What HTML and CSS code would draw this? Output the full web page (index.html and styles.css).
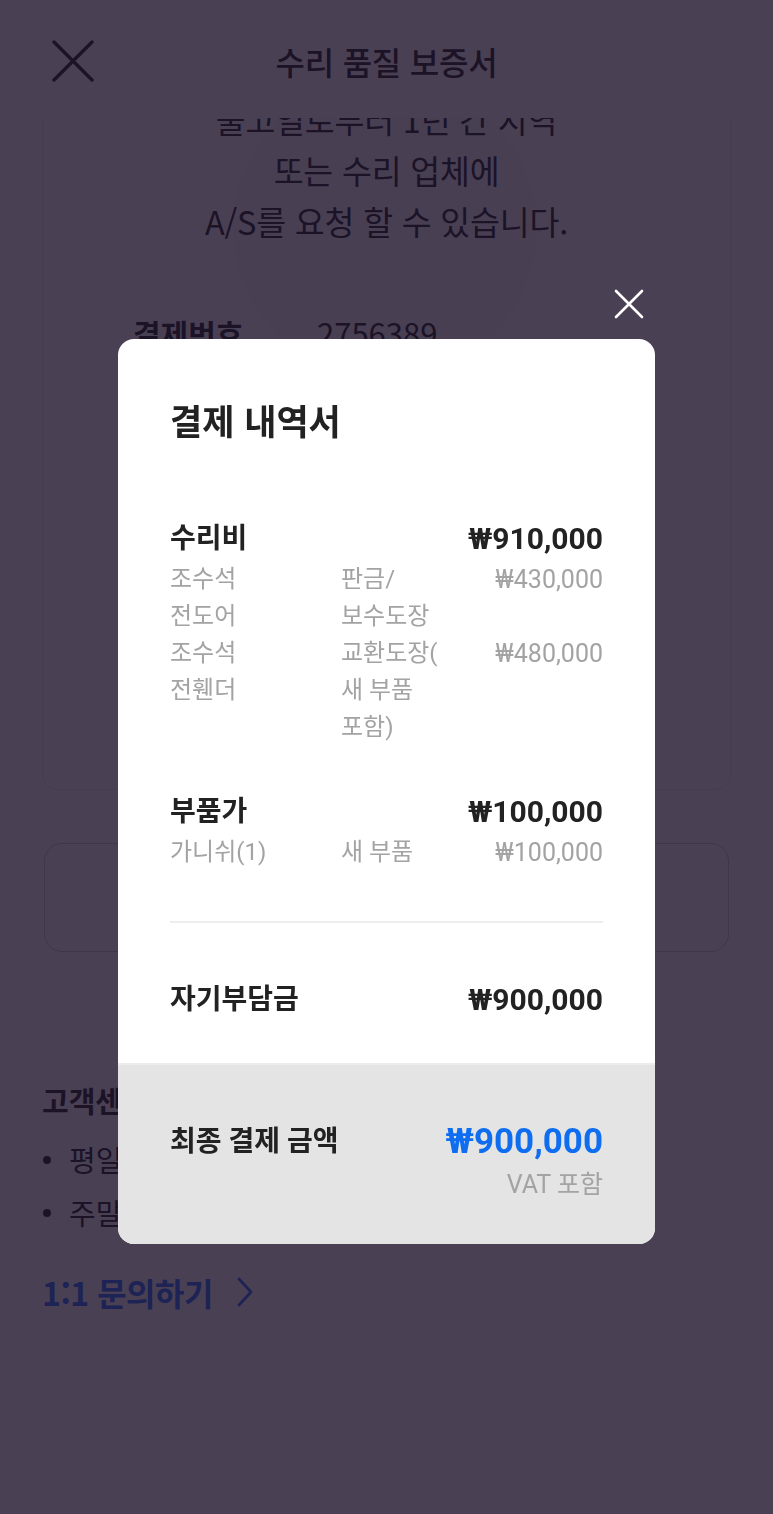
FILE: index.html
```html
<!DOCTYPE html>
<html lang="ko">
<head>
<meta charset="utf-8">
<title>수리 품질 보증서</title>
<link rel="stylesheet" href="styles.css">
</head>
<body>
<div class="page">
  <header class="topbar">
    <button class="topbar-close" aria-label="닫기">
      <svg viewBox="0 0 42 42" width="42" height="42"><path d="M2 2 L40 40 M40 2 L2 40" stroke="#333" stroke-width="3.4" stroke-linecap="round" fill="none"/></svg>
    </button>
    <h1 class="topbar-title">수리 품질 보증서</h1>
  </header>
  <main class="content">
    <div class="content-inner">
      <section class="warranty-card">
        <div class="watermark"></div>
        <p class="notice">출고일로부터 1년 간 지역<br>또는 수리 업체에<br>A/S를 요청 할 수 있습니다.</p>
        <dl class="info-row">
          <dt>결제번호</dt>
          <dd>2756389</dd>
        </dl>
      </section>
      <div class="action-box"></div>
      <section class="support">
        <h3 class="support-title">고객센터 1588-0000</h3>
        <ul class="support-list">
          <li>평일 09:00 ~ 18:00</li>
          <li>주말 및 공휴일 휴무</li>
        </ul>
        <a class="support-link" href="#">1:1 문의하기
          <svg viewBox="0 0 16 30" width="16" height="30"><path d="M2 2 L14 15 L2 28" stroke="#3a7bff" stroke-width="2.8" fill="none" stroke-linecap="round" stroke-linejoin="round"/></svg>
        </a>
      </section>
    </div>
  </main>
</div>

<div class="overlay">
  <div class="dialog">
    <button class="dialog-close" aria-label="닫기">
      <svg viewBox="0 0 30 30" width="30" height="30"><path d="M2 2 L28 28 M28 2 L2 28" stroke="#fff" stroke-width="2.6" stroke-linecap="round" fill="none"/></svg>
    </button>
    <div class="receipt">
      <div class="receipt-body">
        <h2 class="receipt-title">결제 내역서</h2>

        <section class="fee-group">
          <div class="fee-head"><span>수리비</span><span class="amount">₩910,000</span></div>
          <div class="fee-item">
            <span class="fee-name">조수석<br>전도어</span>
            <span class="fee-type">판금/<br>보수도장</span>
            <span class="fee-price">₩430,000</span>
          </div>
          <div class="fee-item">
            <span class="fee-name">조수석<br>전휀더</span>
            <span class="fee-type">교환도장(<br>새 부품<br>포함)</span>
            <span class="fee-price">₩480,000</span>
          </div>
        </section>

        <section class="fee-group parts">
          <div class="fee-head"><span>부품가</span><span class="amount">₩100,000</span></div>
          <div class="fee-item">
            <span class="fee-name">가니쉬(1)</span>
            <span class="fee-type">새 부품</span>
            <span class="fee-price">₩100,000</span>
          </div>
        </section>

        <hr class="divider">

        <div class="fee-head deductible"><span>자기부담금</span><span class="amount">₩900,000</span></div>
      </div>
      <div class="receipt-total">
        <span class="total-label">최종 결제 금액</span>
        <div class="total-values">
          <span class="total-amount">₩900,000</span>
          <span class="total-note">VAT 포함</span>
        </div>
      </div>
    </div>
  </div>
</div>
</body>
</html>
```

FILE: styles.css
```css
* { box-sizing: border-box; }

html, body {
  margin: 0;
  padding: 0;
}

body {
  width: 773px;
  height: 1514px;
  overflow: hidden;
  background: #ffffff;
  font-family: "Noto Sans CJK KR", "Noto Sans", sans-serif;
  color: #333;
  position: relative;
}

/* ---------- background page ---------- */
.page {
  display: flex;
  flex-direction: column;
  height: 1514px;
}

.topbar {
  flex: 0 0 118px;
  display: flex;
  align-items: flex-start;
  position: relative;
  background: #fff;
  z-index: 1;
}

.topbar-close {
  border: 0;
  background: none;
  padding: 0;
  margin: 40px 0 0 52px;
  width: 42px;
  height: 42px;
  display: block;
}
.topbar-close svg { display: block; }

.topbar-title {
  position: absolute;
  left: 0;
  right: 0;
  top: 37px;
  margin: 0;
  text-align: center;
  font-size: 32px;
  line-height: 48px;
  font-weight: 500;
  color: #333;
  letter-spacing: -0.2px;
}

.content {
  flex: 1;
  overflow: hidden;
}

.content-inner {
  margin-top: -61px;
  padding: 0 42px;
}

.warranty-card {
  position: relative;
  height: 733px;
  border: 1px solid #ececec;
  border-radius: 16px;
  padding-top: 35px;
}

.watermark {
  position: absolute;
  left: 190px;
  top: 18px;
  width: 304px;
  height: 304px;
  border-radius: 50%;
  background: #f9f9fa;
}

.notice {
  position: relative;
  margin: 0;
  text-align: center;
  font-size: 32.5px;
  line-height: 51px;
  color: #333;
  letter-spacing: -0.2px;
}

.info-row {
  position: relative;
  display: flex;
  margin: 67px 0 0 90px;
  line-height: 40px;
}
.info-row dt {
  width: 184px;
  font-size: 30px;
  font-weight: 700;
  color: #333;
}
.info-row dd {
  margin: 0;
  font-size: 31px;
  color: #333;
}

.action-box {
  margin: 53px 2px 0;
  height: 109px;
  border: 1.5px solid #cfcfcf;
  border-radius: 18px;
}

.support {
  padding-top: 128px;
}
.support-title {
  margin: 0;
  font-size: 29px;
  line-height: 40px;
  font-weight: 700;
  color: #333;
}
.support-list {
  list-style: none;
  margin: 13px 0 0;
  padding: 0;
}
.support-list li {
  position: relative;
  padding-left: 27px;
  font-size: 29px;
  line-height: 53px;
  color: #333;
}
.support-list li::before {
  content: "";
  position: absolute;
  left: 1px;
  top: 23px;
  width: 8px;
  height: 8px;
  border-radius: 50%;
  background: #333;
}
.support-link {
  display: inline-flex;
  align-items: center;
  gap: 24px;
  margin-top: 31px;
  font-size: 32px;
  line-height: 44px;
  font-weight: 700;
  color: #3a7bff;
  text-decoration: none;
  letter-spacing: -0.5px;
}
.support-link svg { display: block; }

/* ---------- overlay & dialog ---------- */
.overlay {
  position: fixed;
  inset: 0;
  background: rgba(22, 10, 36, 0.78);
  display: flex;
  justify-content: center;
  align-items: flex-start;
  padding-top: 289px;
  z-index: 10;
}

.dialog {
  width: 537px;
  display: flex;
  flex-direction: column;
}

.dialog-close {
  align-self: flex-end;
  margin-right: 11px;
  border: 0;
  background: none;
  padding: 0;
  width: 30px;
  height: 30px;
}
.dialog-close svg { display: block; }

.receipt {
  margin-top: 20px;
  background: #fff;
  border-radius: 16px;
  overflow: hidden;
  font-family: Roboto, "Noto Sans CJK KR", sans-serif;
}

.receipt-body {
  padding: 57px 52px 41px;
}

.receipt-title {
  margin: 0;
  font-family: "Noto Sans CJK KR", sans-serif;
  font-size: 35px;
  line-height: 48px;
  font-weight: 700;
  color: #222;
}

.fee-group {
  margin-top: 72px;
}
.fee-group.parts {
  margin-top: 43px;
}

.fee-head {
  display: flex;
  justify-content: space-between;
  align-items: center;
  font-size: 28px;
  line-height: 45px;
  font-weight: 700;
  color: #222;
}
.fee-head .amount {
  font-size: 30px;
}

.fee-item {
  display: grid;
  grid-template-columns: 171px 1fr auto;
  font-size: 24px;
  line-height: 37px;
  color: #a3a3a3;
}
.fee-price {
  text-align: right;
  font-size: 25px;
}

.divider {
  margin: 50px 0 0;
  border: 0;
  height: 2px;
  background: #eeeeee;
}

.deductible {
  margin-top: 54px;
}

.receipt-total {
  background: #e4e4e4;
  border-top: 2px solid #ececec;
  padding: 55px 52px 38px;
  display: flex;
  justify-content: space-between;
  align-items: flex-start;
}

.total-label {
  font-size: 28px;
  line-height: 44px;
  font-weight: 700;
  color: #222;
}

.total-values {
  display: flex;
  flex-direction: column;
  align-items: flex-end;
}
.total-amount {
  font-size: 35px;
  line-height: 44px;
  font-weight: 700;
  color: #0f6ef0;
}
.total-note {
  font-size: 25px;
  line-height: 42px;
  color: #a3a3a3;
}
```
